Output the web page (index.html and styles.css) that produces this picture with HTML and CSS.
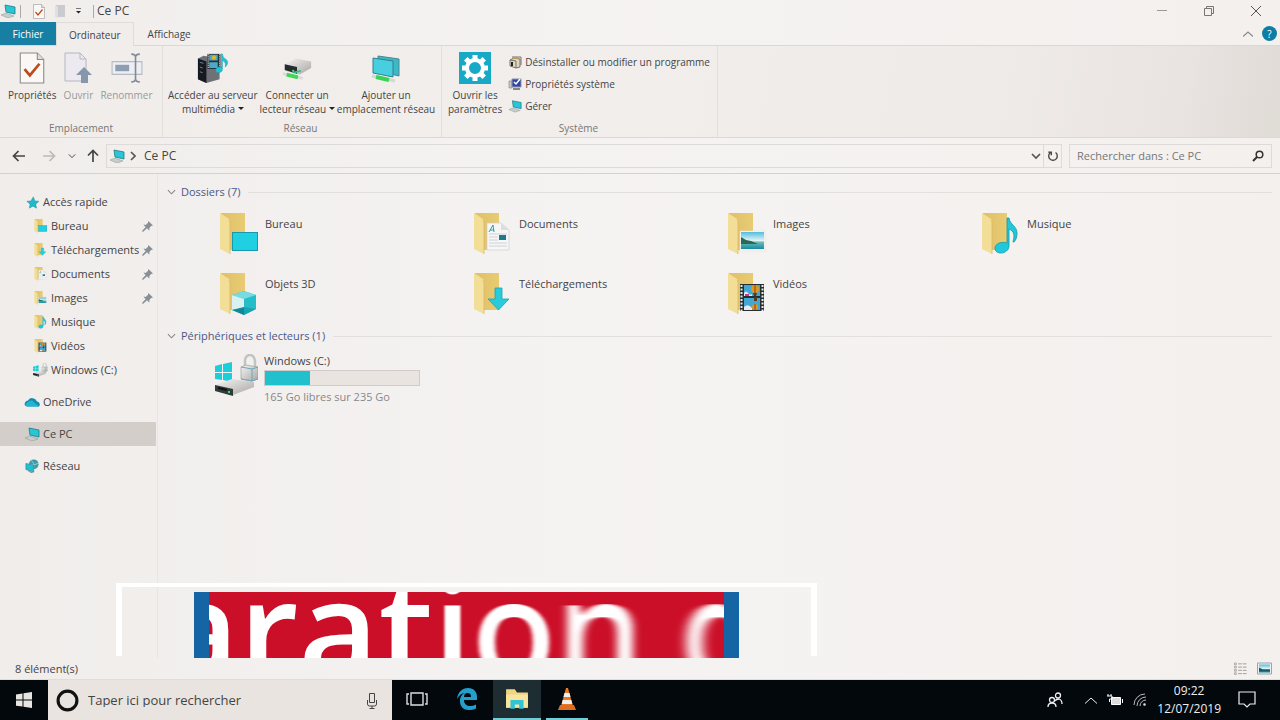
FILE: index.html
```html
<!DOCTYPE html>
<html lang="fr">
<head>
<meta charset="utf-8">
<title>Ce PC</title>
<link rel="stylesheet" href="styles.css">
</head>
<body>
<svg class="defs" aria-hidden="true">
  <defs>
    <linearGradient id="gold" x2="1"><stop offset="0" stop-color="#e0c06a"/><stop offset="1" stop-color="#e8cb72"/></linearGradient>
    <linearGradient id="sky" x2="0" y2="1"><stop offset="0" stop-color="#53bce0"/><stop offset=".5" stop-color="#e0f3f4"/><stop offset=".6" stop-color="#6eb9bb"/><stop offset="1" stop-color="#168b9f"/></linearGradient>
    <linearGradient id="metal" x2="1" y2="1"><stop offset="0" stop-color="#f5f4f2"/><stop offset="1" stop-color="#a9a7a4"/></linearGradient>
    <filter id="soft1" x="-10%" width="120%"><feGaussianBlur stdDeviation="1 0"/></filter>
    <filter id="soft2" x="-10%" width="120%"><feGaussianBlur stdDeviation="2 0"/></filter>
    <filter id="soft3" x="-10%" width="120%"><feGaussianBlur stdDeviation="4 0"/></filter>
    <filter id="soft4" x="-20%" width="140%"><feGaussianBlur stdDeviation="6 0"/></filter>
  </defs>
  <symbol id="folder" viewBox="0 0 40 42"><path d="M1 0h24v37H4z" fill="url(#gold)"/><path d="M0 0l9 6q1 1 1 3v32L0 36z" fill="#f3de97"/><path d="M9 7q1 1 1 3v31" stroke="#d9b95f" stroke-width=".8" fill="none"/></symbol>
  <symbol id="screen" viewBox="0 0 40 42"><rect x="12.500" y="19.500" width="25" height="18" fill="#1fd0e2" stroke="#1798ab"/></symbol>
  <symbol id="doc" viewBox="0 0 40 42"><path d="M13 10h14l8 7v20H13z" fill="#f6f6f6" stroke="#cfcfcf" stroke-width=".7"/><path d="M27 10v7h8" fill="#ddd"/><path d="M15 21h18M15 24h9M15 27h9M15 30h18M15 33h18" stroke="#c3cbcd" stroke-width=".8"/><path d="M15 19l4-7 1 7M16 17h4" fill="none" stroke="#2a9eae"/><rect x="25" y="22" width="7" height="5" fill="#1c7c8b"/></symbol>
  <symbol id="photo" viewBox="0 0 40 42"><rect x="12" y="18" width="25" height="20" fill="#f7f7f5" stroke="#ddd" stroke-width=".5"/><rect x="13" y="19" width="23" height="17" fill="url(#sky)"/><path d="M13 24l5 3 5 1 7 3H13z" fill="#276a55"/></symbol>
  <symbol id="note" viewBox="0 0 40 42"><path d="M25 5h2c1 7 8 8 8 15 0 4-1 7-3 9h-1c2-7 1-11-4-13v17c0 4-4 7-8 7-4 0-6-2-6-5 0-4 6-7 12-5z" fill="#1fc8da" stroke="#1297a8" stroke-width=".8"/></symbol>
  <symbol id="cube" viewBox="0 0 40 42"><path d="M12 22l12-4 12 4v14l-12 6-12-5z" fill="#25bdc8"/><path d="M12 22l12-4 12 4-12 4z" fill="#77dbe1"/><path d="M12 22l12 4v9l-12 2z" fill="#d9f1f0"/><path d="M12 37l12-3v8z" fill="#108895"/><path d="M24 34l12 2-12 6z" fill="#1aa3b0"/></symbol>
  <symbol id="down" viewBox="0 0 40 42"><path d="M21 15h7v11h7L24.500 37 14 26h7z" fill="#28cbdc" stroke="#1aa3b4" stroke-width=".8"/></symbol>
  <symbol id="film" viewBox="0 0 40 42"><rect x="12" y="11" width="24" height="27" fill="#292d30"/><path d="M13.500 12v26M34.500 12v26" stroke="#e8e8e8" stroke-width="2" stroke-dasharray="2 1.500"/><path d="M16 12h16v11H16zM16 25h16v12H16z" fill="#41a8d4"/><circle cx="27" cy="16" r="4" fill="#d99b1e"/><path d="M25 20h4l-1 3h-2zM26 24h3v4h-3z" fill="#5d341c"/><path d="M27 12v8" stroke="#a62c21"/><path d="M16 20q2-3 4 0t4 1v2h-8zM16 34q4-4 8 1v2h-8z" fill="#f0e6ed"/><path d="M17 22h4" stroke="#c13d92" stroke-width="2"/><circle cx="27" cy="34" r="3" fill="#d99b1e"/><path d="M27 31v6" stroke="#a62c21"/></symbol>
  <symbol id="pc" viewBox="0 0 16 14"><path d="M5 1l10 2v7L6 8z" fill="#28c6d6" stroke="#207b87" stroke-width=".8"/><path d="M1 11l5-2 8 3-6 2z" fill="#c9cccd" stroke="#8b9496" stroke-width=".5"/></symbol>
  <symbol id="drive" viewBox="0 0 44 42"><path d="M1 11l7-2v8H1zM9 9l9-2v10H9zM1 18h7v7l-7-1zM9 18h9v9l-9-2z" fill="#1cced9"/><path d="M1 30l17-6 22 3v5l-21 8-18-4z" fill="url(#metal)"/><path d="M1 30l18 4v7L1 36z" fill="#303b3b"/><path d="M4 33l9 2" stroke="#111" stroke-width="2"/><path d="M15 36v2" stroke="#3ad77f" stroke-width="2"/><path d="M31 13V5q1-5 5-5t5 6v6" fill="none" stroke="#c1c4c4" stroke-width="2.500"/><path d="M27 12l5-2 12 2v12l-6 2-11-2z" fill="url(#metal)" stroke="#8f999a" stroke-width=".6"/><path d="M27 12l11 2 6-2M27 24l11 2 6-2M38 14v12" stroke="#6da5bc" fill="none"/></symbol>
  <symbol id="cloud" viewBox="0 0 16 11"><path d="M1 9a3.500 3.500 0 013-5 5 5 0 019 1 3 3 0 012 5H3z" fill="#158bb0"/><path d="M1 9q3-5 7-5l7 6H3z" fill="#22b5d3"/></symbol>
  <symbol id="net" viewBox="0 0 16 16"><circle cx="10" cy="6" r="5.500" fill="#3d98a8"/><path d="M7 2q4 2 3 8M5 6q5 2 10-1" stroke="#a5d2d8" fill="none"/><path d="M1 5l9 2v8l-9-3z" fill="#22bfd1" stroke="#167d8b" stroke-width=".6"/><path d="M4 14l5 2" stroke="#777"/></symbol>
  <symbol id="star" viewBox="0 0 16 16"><path d="M9 1l2 5 5 .5-4 3.500 1 5-4.500-2.500L4 15l1-5-4-3.500 5-.5z" fill="#20b9cb" stroke="#158b9c" stroke-width=".5"/></symbol>
  <symbol id="pin" viewBox="0 0 12 12"><path d="M7 0l5 5-2 .5-2 2v3L5.500 8 1 12 0 11l4-4.500L1.500 4h3l2-2z" fill="#879096"/></symbol>
  <symbol id="check" viewBox="0 0 24 30"><path d="M1 1h16l6 6v22H1z" fill="#faf8f6" stroke="#8b8986"/><path d="M17 1v6h6" fill="#dedbd8" stroke="#8b8986"/><path d="M5 16l5 6 9-11" stroke="#bd4a1c" stroke-width="2.500" fill="none"/></symbol>
  <symbol id="server" viewBox="0 0 34 32"><path d="M1 6l6-3 17 3v22l-14 4-9-4z" fill="#6e7276"/><path d="M1 6l9 3v23l-9-4z" fill="#17191e"/><path d="M3 10l4 1M3 15l3 1M3 20l3 1" stroke="#6389a8"/><rect x="11" y="1" width="14" height="16" fill="#26343a"/><path d="M13 2h9v6h-9zM13 10h9v6h-9z" fill="#4caac8"/><circle cx="18" cy="5" r="2.300" fill="#e5b325"/><path d="M12 1v16M24 1v16" stroke="#eee" stroke-dasharray="1 1"/><path d="M26 1h1q0 4 4 6c3 3 1 6-1 8 1-5-1-6-3-7v9q0 4-5 4-3-1-2-4 2-3 6-2z" fill="#1bc3d4" stroke="#1596a5" stroke-width=".5"/></symbol>
  <symbol id="netdrive" viewBox="0 0 34 28"><path d="M4 10l12-6 16 3v7l-12 7-16-4z" fill="url(#metal)"/><path d="M4 10l13 3v7L4 16z" fill="#262b2c"/><path d="M13 16v2" stroke="#55e880" stroke-width="2"/><path d="M2 20l21 5" stroke="#d7dcd9" stroke-width="3"/><path d="M6 21l12 3" stroke="#42d659" stroke-width="4"/><path d="M13 19l8-2" stroke="#1fc58c" stroke-width="2"/></symbol>
  <symbol id="netscreen" viewBox="0 0 32 30"><path d="M8 3l21 3v17L8 18z" fill="#3bb9c9" stroke="#4a8790"/><path d="M3 5l20 3v16L3 20z" fill="#47cedf" stroke="#34808c"/><path d="M2 23l23 5" stroke="#d2d9d5" stroke-width="3"/><path d="M6 24l13 3" stroke="#38d255" stroke-width="4"/></symbol>
  <symbol id="gear" viewBox="0 0 32 32"><rect width="32" height="32" fill="#18a9c7"/><g fill="none" stroke="#fff"><circle cx="16" cy="16" r="8" stroke-width="4"/><path d="M16 3v5M16 24v5M3 16h5M24 16h5M6.800 6.800l3.500 3.500M21.700 21.700l3.500 3.500M6.800 25.200l3.500-3.500M21.700 10.300l3.500-3.500" stroke-width="5"/></g></symbol>
  <symbol id="box" viewBox="0 0 14 14"><path d="M2 5l4-2 6 1v8l-4 1-6-2z" fill="#e0d6bb" stroke="#5a564d" stroke-width=".8"/><path d="M2 5l6 1v7M4 2h9v8" fill="none" stroke="#737373"/><path d="M4 7v4" stroke="#222" stroke-width="2"/><path d="M5 3h5" stroke="#ca9942" stroke-width="2"/></symbol>
  <symbol id="sys" viewBox="0 0 14 14"><path d="M1 4h3v7H1z" fill="#c9c6c2" stroke="#807e82" stroke-width=".6"/><path d="M4 2h9v8H4z" fill="#3046a4" stroke="#8d91aa"/><path d="M6 5l2 2 4-5" fill="none" stroke="#fff" stroke-width="1.500"/><path d="M5 12h7" stroke="#888" stroke-width="2"/></symbol>
  <symbol id="chev" viewBox="0 0 10 6"><path d="M1 1l4 4 4-4" fill="none" stroke="currentColor" stroke-width="1.200"/></symbol>
  <symbol id="arrow" viewBox="0 0 14 12"><path d="M13 6H2M6.500 1L1.500 6l5 5" fill="none" stroke="currentColor" stroke-width="1.700"/></symbol>
</svg>

<div class="window">
  <header class="titlebar">
    <svg class="i16"><use href="#pc"/></svg><i class="sep"></i>
    <button class="quick" aria-label="Propriétés"><svg viewBox="0 0 24 30"><use href="#check"/></svg></button>
    <button class="quick" aria-label="Nouveau dossier"><svg viewBox="0 0 12 15"><path d="M2 1h9v12H3z" fill="#c9cbd0"/><path d="M1 1l3 2v11l-3-1z" fill="#dfe0e3"/></svg></button>
    <button class="quick more" aria-label="Personnaliser"><svg viewBox="0 0 7 6"><path d="M1 .5h5" stroke="#777"/><path d="M1 3h5L3.500 5.500z" fill="#222"/></svg></button>
    <i class="sep"></i><h1>Ce PC</h1>
    <div class="controls">
      <button aria-label="Réduire"><svg viewBox="0 0 12 12"><path d="M1 5.500h10" stroke="#999"/></svg></button>
      <button aria-label="Restaurer"><svg viewBox="0 0 12 12" fill="none" stroke="#777"><path d="M1.500 3.500h7v7h-7zM3.500 3V1.500h7v7H9"/></svg></button>
      <button aria-label="Fermer"><svg viewBox="0 0 12 12"><path d="M1 1l10 10M11 1L1 11" stroke="#555"/></svg></button>
    </div>
  </header>
  <nav class="tabs">
    <button class="file">Fichier</button><button class="tab on">Ordinateur</button><button class="tab">Affichage</button>
    <button class="fold" aria-label="Réduire le ruban"><svg viewBox="0 0 10 6"><path d="M0 5.500L5 1l5 4.500" fill="none" stroke="#888" stroke-width="1.200"/></svg></button>
    <button class="help" aria-label="Aide">?</button>
  </nav>
  <section class="ribbon">
    <div class="group place"><div class="tools">
      <button class="big"><svg><use href="#check"/></svg><span>Propriétés</span></button>
      <button class="big off"><svg viewBox="0 0 28 32"><path d="M1 1h15l6 6v22H1z" fill="#eceaf0" stroke="#b4b7c0"/><path d="M16 1v6h6" fill="none" stroke="#b4b7c0"/><path d="M20 15l8 8h-4v8h-7v-8h-5z" fill="#8797ab"/></svg><span>Ouvrir</span></button>
      <button class="big off"><svg viewBox="0 0 30 30"><path d="M1 9h28v12H1z" fill="#eeedf2" stroke="#b5bac5"/><path d="M4 12h13v6H4z" fill="#8d9eb4"/><path d="M19 2q4 0 4 3v20q0 3-4 3M27 2q-4 0-4 3M23 25q0 3 4 3" fill="none" stroke="#7f8a9b" stroke-width="1.500"/></svg><span>Renommer</span></button>
    </div><h2>Emplacement</h2></div>
    <div class="group network"><div class="tools">
      <button class="big"><svg><use href="#server"/></svg><span>Accéder au serveur<br>multimédia <i class="tri"></i></span></button>
      <button class="big"><svg><use href="#netdrive"/></svg><span>Connecter un<br>lecteur réseau <i class="tri"></i></span></button>
      <button class="big"><svg><use href="#netscreen"/></svg><span>Ajouter un<br>emplacement réseau</span></button>
    </div><h2>Réseau</h2></div>
    <div class="group system"><div class="tools">
      <button class="big"><svg><use href="#gear"/></svg><span>Ouvrir les<br>paramètres</span></button>
      <div class="list">
        <button><svg><use href="#box"/></svg>Désinstaller ou modifier un programme</button>
        <button><svg><use href="#sys"/></svg>Propriétés système</button>
        <button><svg><use href="#pc"/></svg>Gérer</button>
      </div>
    </div><h2>Système</h2></div>
  </section>
  <section class="location">
    <button aria-label="Précédent"><svg><use href="#arrow"/></svg></button>
    <button class="next" aria-label="Suivant"><svg><use href="#arrow"/></svg></button>
    <button class="recent" aria-label="Emplacements récents"><svg><use href="#chev"/></svg></button>
    <button class="up" aria-label="Dossier parent"><svg><use href="#arrow"/></svg></button>
    <div class="address"><svg class="i16"><use href="#pc"/></svg><svg class="crumb" viewBox="0 0 6 10"><path d="M1 1l4 4-4 4" fill="none" stroke="#555" stroke-width="1.600"/></svg><span>Ce PC</span>
      <button class="open" aria-label="Historique"><svg viewBox="0 0 10 8"><path d="M1 2l4 4 4-4" fill="none" stroke="#555" stroke-width="1.700"/></svg></button>
      <button class="reload" aria-label="Actualiser"><svg viewBox="0 0 14 14"><path d="M10 3a5 5 0 11-6 0M1.500 2.500H5V6" fill="none" stroke="#444" stroke-width="1.600"/></svg></button></div>
    <label class="search"><input type="search" aria-label="Rechercher" placeholder="Rechercher dans : Ce PC"><svg viewBox="0 0 12 12"><circle cx="7.500" cy="4.500" r="3.300" fill="none" stroke="#333" stroke-width="1.500"/><path d="M5 7l-4 4" stroke="#333" stroke-width="2"/></svg></label>
  </section>
  <div class="body">
    <nav class="side">
      <a href="#"><svg class="i14"><use href="#star"/></svg>Accès rapide</a>
      <a href="#" class="sub"><svg><use href="#folder"/><use href="#screen"/></svg>Bureau<svg class="pin"><use href="#pin"/></svg></a>
      <a href="#" class="sub"><svg><use href="#folder"/><use href="#down"/></svg>Téléchargements<svg class="pin"><use href="#pin"/></svg></a>
      <a href="#" class="sub"><svg><use href="#folder"/><use href="#doc"/></svg>Documents<svg class="pin"><use href="#pin"/></svg></a>
      <a href="#" class="sub"><svg><use href="#folder"/><use href="#photo"/></svg>Images<svg class="pin"><use href="#pin"/></svg></a>
      <a href="#" class="sub"><svg><use href="#folder"/><use href="#note"/></svg>Musique</a>
      <a href="#" class="sub"><svg><use href="#folder"/><use href="#film"/></svg>Vidéos</a>
      <a href="#" class="sub disk"><svg><use href="#drive"/></svg>Windows (C:)</a>
      <a href="#" class="root"><svg><use href="#cloud"/></svg>OneDrive</a>
      <a href="#" class="root current"><svg><use href="#pc"/></svg>Ce PC</a>
      <a href="#" class="root"><svg><use href="#net"/></svg>Réseau</a>
    </nav>
    <main>
      <h2 class="section"><svg><use href="#chev"/></svg>Dossiers (7)</h2>
      <div class="folders">
        <a href="#"><svg><use href="#folder"/><use href="#screen"/></svg>Bureau</a>
        <a href="#"><svg><use href="#folder"/><use href="#doc"/></svg>Documents</a>
        <a href="#"><svg><use href="#folder"/><use href="#photo"/></svg>Images</a>
        <a href="#"><svg><use href="#folder"/><use href="#note"/></svg>Musique</a>
        <a href="#"><svg><use href="#folder"/><use href="#cube"/></svg>Objets 3D</a>
        <a href="#"><svg><use href="#folder"/><use href="#down"/></svg>Téléchargements</a>
        <a href="#"><svg><use href="#folder"/><use href="#film"/></svg>Vidéos</a>
      </div>
      <h2 class="section"><svg><use href="#chev"/></svg>Périphériques et lecteurs (1)</h2>
      <a href="#" class="volume"><svg><use href="#drive"/></svg><div><span>Windows (C:)</span><div class="gauge"><div style="width:29%"></div></div><small>165 Go libres sur 235 Go</small></div></a>
    </main>
  </div>
  <footer class="status"><span>8 élément(s)</span>
    <button aria-label="Détails"><svg viewBox="0 0 15 14"><path d="M1 1h2v2H1zM1 4.500h2v2H1zM1 8h2v2H1zM1 11.500h2v2H1z" fill="#ddd" stroke="#999" stroke-width=".7"/><path d="M5 2h10M5 5.500h10M5 9h10M5 12.500h10" stroke="#999" stroke-dasharray="4 1"/></svg></button>
    <button aria-label="Grandes icônes"><svg viewBox="0 0 15 12"><path d="M.5.500h14v11H.5z" fill="#eee" stroke="#9ba5a8"/><path d="M2 2h11v8H2z" fill="url(#sky)"/><path d="M2 5l4 2h7v2H2z" fill="#145c6b"/></svg></button>
  </footer>
</div>

<footer class="taskbar">
  <button class="start" aria-label="Démarrer"><svg viewBox="0 0 16 16"><path d="M0 2.500l6.500-1v6H0zM7.500 1.300L16 0v7.500H7.500zM0 8.500h6.500v6L0 13.700zM7.500 8.500H16V16l-8.500-1.300z" fill="#e8e4e0"/></svg></button>
  <label class="cortana"><svg class="ring" viewBox="0 0 22 22"><circle cx="11" cy="11" r="9" fill="none" stroke="#111" stroke-width="3"/></svg><input aria-label="Recherche" placeholder="Taper ici pour rechercher"><svg class="mic" viewBox="0 0 12 17" fill="none" stroke="#444"><path d="M3.500 1.500h5v9h-5zM1.500 8v4q0 2 2 2h5q2 0 2-2V8M6 14v2M3.500 16.500h5"/></svg></label>
  <button class="app" aria-label="Affichage des tâches"><svg class="views" viewBox="0 0 22 16" fill="none" stroke="#ddd" stroke-width="1.400"><path d="M5 2h12v12H5zM3 3H1v10h2M19 3h2v10h-2"/></svg></button>
  <button class="app" aria-label="Edge"><svg class="edge" viewBox="0 0 20 22"><path d="M0 11C1 4 5 0 11 0c6 0 9 4 9 9v3H7c0 4 3 6 6 6 2 0 4-.5 6-1.500v4C17 21.500 14 22 11.500 22 6 22 3 18 3 13c0-4 2-7 5-8-3 0-6 2-8 6zM7 9h7c0-3-1-4-3.500-4S7 7 7 9z" fill="#239fce"/></svg></button>
  <button class="app open" aria-label="Explorateur"><svg class="explorer" viewBox="0 0 22 20"><path d="M1 1h8l2 3h10v14H1z" fill="#f0d580"/><path d="M1 6h20v12H1z" fill="#f7e4a0"/><path d="M5 19v-8h12v8h-4v-4H9v4z" fill="#30c4d5"/></svg></button>
  <button class="app run" aria-label="VLC"><svg class="vlc" viewBox="0 0 20 24"><path d="M9 1h2l5 18H4z" fill="#e87922"/><path d="M7.500 6h5l1 4h-7zM5.700 13h8.600l1 4H4.700z" fill="#f1eeeb"/><path d="M3 18h14l2 5H1z" fill="#de6e22"/></svg></button>
  <div class="tray">
    <svg class="people" viewBox="0 0 16 16" fill="none" stroke="#eee" stroke-width="1.300"><circle cx="5" cy="8" r="2.500"/><circle cx="11" cy="3.500" r="2.500"/><path d="M1 15q0-4 4-4t4 4M8 9q1-2 4-2 3 1 3 5"/></svg>
    <svg class="caret" viewBox="0 0 12 7"><path d="M0 6.500L6 1l6 5.500" fill="none" stroke="#eee"/></svg>
    <svg class="battery" viewBox="0 0 16 12"><path d="M4.500 3.500h9v7h-9z" fill="#ddd" stroke="#fff"/><path d="M15.500 5v4M0 2h5v3H2.500v3M1 0v2M4 0v2" stroke="#fff" fill="none"/></svg>
    <svg class="wifi" viewBox="0 0 14 14" fill="none" stroke="#bbb"><path d="M1 12A11 11 0 0112 1M4 13a9 9 0 019-9M7 13a6 6 0 016-6"/><circle cx="11.500" cy="11.500" r="1" fill="#ddd"/></svg>
    <time>09:22<br>12/07/2019</time>
    <svg class="notify" viewBox="0 0 18 18"><path d="M1 1h16v12h-5l-3 3-3-3H1z" fill="none" stroke="#eee" stroke-width="1.200"/></svg>
  </div>
</footer>

<div class="frame"></div>
<div class="banner"><p><span>ara</span><span>t</span><span class="s1">i</span><span class="s2">o</span><span class="s3">n</span> <span class="s4">d</span></p></div>
</body>
</html>
```
FILE: styles.css
```css
* { box-sizing: border-box; }
body { margin: 0; min-height: 100vh; display: flex; flex-direction: column; position: relative; overflow: hidden; font: 11px/14px "Open Sans", "Noto Sans", sans-serif; color: #444; background: linear-gradient(90deg, #f0edeb, #f5f3f2 45%, #f4f0ee); }
button { font: inherit; color: inherit; background: none; border: 0; padding: 0; margin: 0; }
a { color: inherit; text-decoration: none; }
h1, h2, p { margin: 0; font-weight: 400; font-size: inherit; }
input { font: inherit; background: none; border: 0; padding: 0; outline: 0; min-width: 0; flex: 1; }
input::placeholder { color: #777; opacity: 1; }
svg { display: block; flex: none; }
.defs { position: absolute; width: 0; height: 0; }
.window { flex: 1; display: flex; flex-direction: column; }
.i16 { width: 16px; height: 14px; }
.i14 { width: 13px; height: 13px; }

.titlebar { height: 22px; display: flex; align-items: center; }
.titlebar h1 { font-size: 12px; margin-left: 3px; }
.sep { width: 1px; height: 13px; background: #aaa; margin-left: 4px; }
.quick { margin-left: 12px; }
.quick svg { width: 12px; height: 15px; }
.quick + .quick { margin-left: 9px; }
.quick.more svg { width: 7px; height: 6px; }
.more + .sep { margin-left: 11px; }
.controls { margin-left: auto; display: flex; padding-right: 1px; }
.controls button { width: 47px; height: 22px; display: grid; place-items: center; }
.controls svg { width: 12px; height: 12px; }

.tabs { height: 24px; display: flex; font-size: 10px; border-bottom: 1px solid #dad7d5; }
.file { width: 56px; background: #167fa3; color: #fff; }
.tab { padding: 0 14px; }
.tab.on { padding: 0 12px; border: 1px solid #dfdcda; border-width: 1px 1px 0; background: #f0edeb; margin-bottom: -1px; }
.fold { margin-left: auto; width: 10px; }
.fold svg { width: 10px; height: 6px; }
.help { width: 15px; height: 15px; border-radius: 50%; background: #0e7da3; color: #fff; align-self: center; margin: 0 3px 0 9px; }

.ribbon { height: 92px; display: flex; font-size: 10px; border-bottom: 1px solid #dbd8d6; background: linear-gradient(100deg, #f0edeb, #f2eeec 50%, #eeeae8 80%, #e9e3e1 92%, #dfdbd5); }
.group { display: flex; flex-direction: column; justify-content: space-between; border-right: 1px solid #e3dfdd; padding: 6px 8px 2px; }
.place { width: 163px; }
.network { width: 279px; padding: 6px 8px 2px 5px; }
.system { width: 276px; padding: 6px 8px 2px 6px; }
.group h2 { text-align: center; color: #777; }
.tools { display: flex; gap: 6px; }
.network .tools { gap: 2px; }
.big { display: flex; flex-direction: column; align-items: center; align-self: flex-start; gap: 4px; white-space: nowrap; }
.big svg { width: 32px; height: 32px; }
.off { color: #999; }
.tri { display: inline-block; border: 3px solid transparent; border-top-color: #222; border-bottom: 0; vertical-align: 3px; }
.list { display: flex; flex-direction: column; }
.list button { display: flex; align-items: center; gap: 3px; height: 22px; white-space: nowrap; margin-top: -1px; margin-bottom: 1px; }
.list svg { width: 14px; height: 14px; }

.location { height: 36px; display: flex; align-items: center; padding: 0 8px 0 12px; border-bottom: 1px solid #d5d1cf; }
.location button svg { width: 14px; height: 12px; }
.location .next { color: #bbb; margin-left: 16px; }
.next svg { transform: scaleX(-1); }
.location .recent svg { width: 8px; height: 6px; }
.recent { margin-left: 12px; }
.up { margin: 0 6px 0 10px; }
.up svg { transform: rotate(90deg); }
.address { flex: 1; height: 24px; display: flex; align-items: center; border: 1px solid #dddad8; padding-left: 2px; font-size: 12px; }
.crumb { width: 6px; height: 10px; margin: 0 8px 0 5px; }
.address .open { margin-left: auto; margin-right: 2px; }
.address .open svg { width: 10px; height: 8px; }
.reload { width: 18px; height: 22px; border-left: 1px solid #dddad8; padding-left: 2px; }
.search { width: 203px; height: 24px; border: 1px solid #dddad8; display: flex; align-items: center; margin-left: 7px; padding: 0 7px; }
.search svg { width: 12px; height: 12px; }

.body { flex: 1; display: flex; }
.side { width: 158px; border-right: 1px solid #e9e5e3; padding-top: 16px; }
.side a { height: 24px; display: flex; align-items: center; gap: 4px; padding-left: 26px; margin-right: 1px; }
.side .sub { padding-left: 34px; gap: 3px; }
.sub svg { width: 14px; height: 14px; }
.side .disk { padding-left: 32px; gap: 3px; }
.disk svg { width: 16px; }
.side .pin { width: 11px; height: 11px; margin-left: auto; margin-right: 3px; }
.side .root { margin-top: 8px; padding-left: 24px; gap: 3px; }
.root svg { width: 16px; height: 14px; }
.side .current { background: #d3cec9; }
main { flex: 1; padding: 9px 8px 0 9px; }
.section { display: flex; align-items: center; height: 18px; gap: 5px; color: #4b5889; }
.section svg { width: 9px; height: 6px; color: #888; }
.section::after { content: ""; flex: 1; height: 1px; background: #e3dfdd; margin-left: 3px; }
.folders { display: grid; grid-template-columns: repeat(auto-fill, 254px); grid-auto-rows: 43px; row-gap: 17px; padding: 12px 0 11px 53px; }
.folders a { display: flex; gap: 5px; line-height: 22px; }
.folders svg { width: 40px; height: 42px; }
.volume { display: flex; gap: 6px; padding: 9px 0 0 47px; }
.volume > svg { width: 44px; height: 44px; }
.gauge { width: 156px; height: 16px; border: 1px solid #d1ccc9; background: #e9e4e0; margin: 2px 0 4px; }
.gauge div { height: 100%; background: #20c1cd; }
.volume small { font-size: 11px; color: #888; display: block; }
.status { height: 22px; display: flex; align-items: center; padding: 0 8px 0 15px; border-bottom: 1px solid #ddd; }
.status button:nth-of-type(1) { margin-left: auto; margin-right: 9px; }
.status svg { width: 15px; height: 13px; }

.taskbar { height: 40px; display: flex; background: #03080d; color: #eee; font-size: 12px; }
.start { width: 48px; display: grid; place-items: center; }
.start svg { width: 16px; height: 16px; }
.cortana { width: 344px; background: #e9e4e0; display: flex; align-items: center; padding: 0 14px 0 8px; margin-right: 1px; font-size: 13px; }
.cortana input { margin-left: 9px; }
.cortana input::placeholder { color: #444; }
.ring { width: 23px; height: 23px; }
.mic { width: 12px; height: 17px; }
.app { width: 48px; margin-right: 2px; display: grid; place-items: center; border-bottom: 2px solid transparent; }
.app.open { background: #1e2d32; border-color: #6fced9; }
.run { width: 42px; margin-left: 3px; border-color: #6fced9; }
.views { width: 22px; height: 16px; }
.edge { width: 20px; height: 22px; }
.explorer { width: 24px; height: 22px; }
.vlc { width: 20px; height: 24px; }
.tray { margin-left: auto; display: flex; align-items: center; padding-right: 24px; }
.people { width: 16px; height: 16px; margin-right: 22px; }
.caret { width: 12px; height: 7px; margin-right: 10px; }
.battery { width: 16px; height: 12px; margin-right: 10px; }
.wifi { width: 14px; height: 14px; margin-right: 10px; }
.tray time { text-align: center; line-height: 18px; }
.notify { width: 18px; height: 18px; margin-left: 17px; }

.frame { position: absolute; left: 116px; bottom: 64px; width: 701px; height: 73px; border: 6px solid #fff; border-top-width: 4px; border-bottom: 0; }
.banner { position: absolute; left: 194px; bottom: 62px; width: 545px; height: 66px; border: solid #1565a5; border-width: 0 15px; background: #cb0f28; overflow: hidden; }
.banner p { position: absolute; left: -50px; bottom: -62px; font-size: 138px; font-weight: 600; line-height: 188px; color: #fff; white-space: nowrap; }
.banner span { display: inline-block; }
.s1 { filter: url(#soft1); }
.s2 { filter: url(#soft2); }
.s3 { filter: url(#soft3); }
.s4 { filter: url(#soft4); }
```
